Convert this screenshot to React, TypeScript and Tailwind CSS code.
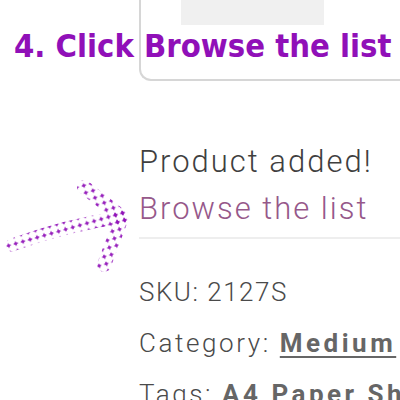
import React from "react";

function DottedArrow() {
    return (
        <svg className="absolute left-0 top-[175px]" width="140" height="100" viewBox="0 0 140 100">
            <defs>
                <pattern id="dots" width="7.4" height="7.4" patternUnits="userSpaceOnUse" patternTransform="rotate(-16)">
                    <path d="M3 1.6h1.4v1.4h1.4v1.4H4.4v1.4H3V4.4H1.6V3H3z" fill="#9011b8" />
                </pattern>
            </defs>
            <g fill="none" stroke="url(#dots)" strokeLinecap="round" strokeLinejoin="round">
                <path d="M12 70 C45 58 80 48 122 42" strokeWidth="13" />
                <path d="M84 12 L122 42 L104 90" strokeWidth="14" />
            </g>
        </svg>
    );
}

export default function App() {
    const body = { fontFamily: '"Roboto", "Liberation Sans", sans-serif' };

    return (
        <div className="relative w-[400px] h-[400px] overflow-hidden bg-white">
            <div className="ml-[139px] h-[81px] border-l-2 border-b-2 border-[#d6d6d6] rounded-bl-[12px]">
                <div className="ml-[40px] w-[143px] h-[25px] bg-[#f0f0f0]" />
            </div>

            <h1
                className="absolute left-[14px] top-[30px] text-[32.5px] font-bold text-[#9010b8] whitespace-nowrap leading-none"
                style={{ fontFamily: '"DejaVu Sans", "Liberation Sans", sans-serif', fontStretch: "condensed" }}
            >
                4. Click Browse the list
            </h1>

            <DottedArrow />

            <div className="pl-[139px] pt-[59px]" style={body}>
                <p className="text-[31px] leading-[44px] text-[#3f3f3f] tracking-[2px] font-light">Product added!</p>
                <a className="block text-[31px] leading-[50px] text-[#96588a] tracking-[2px] font-light">Browse the list</a>
                <div className="mt-[3px] h-[2px] bg-[#eeeeee]" />

                <div className="mt-[38px] flex flex-col gap-[21px] text-[26px] leading-[30px] text-[#4a4a4a] tracking-[1.5px] font-light whitespace-nowrap">
                    <p>SKU: 2127S</p>
                    <p className="tracking-[2.6px]">
                        Category: <span className="font-bold text-[#666666] underline underline-offset-4 tracking-[3.5px]">Medium</span>
                    </p>
                    <p className="tracking-[2.6px]">
                        Tags: <span className="font-bold text-[#666666] tracking-[3.5px]">A4 Paper Sheets</span>
                    </p>
                </div>
            </div>
        </div>
    );
}
